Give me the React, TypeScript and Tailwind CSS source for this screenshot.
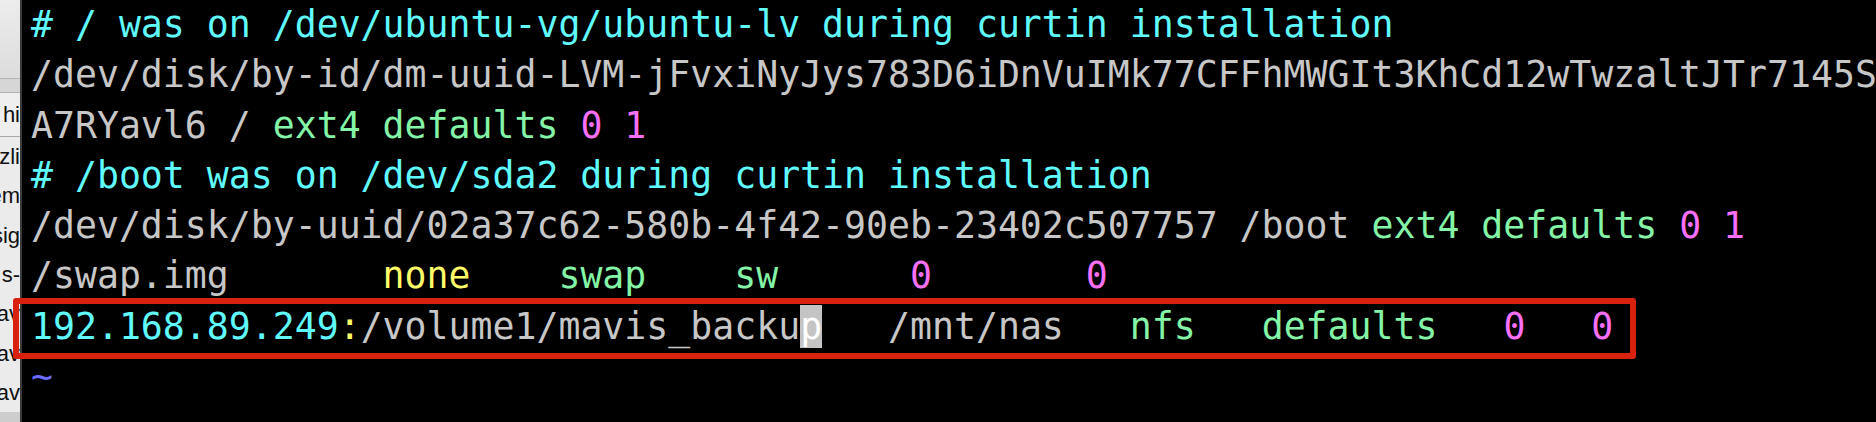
import React from "react";

const C = {
  cyan: "text-[#60fbff]",
  gray: "text-[#c7c7c7]",
  green: "text-[#84f4a6]",
  mag: "text-[#f870f8]",
  yel: "text-[#fdfb68]",
};

function Line({ children }: { children: React.ReactNode }) {
  return <div className="h-[50.3px] leading-[50.3px] whitespace-pre">{children}</div>;
}

const sideRows = ["zli", "em", "sig", "s-", "av", "av", "av"];

export default function App() {
  return (
    <div className="relative flex h-[422px] w-[1876px] overflow-hidden bg-black">
      {/* window behind, peeking on the left */}
      <div className="flex w-[20px] shrink-0 flex-col bg-[#e4e4e4] font-['Liberation_Sans',sans-serif] text-[22px] text-[#111]">
        <div className="h-[78px] bg-gradient-to-b from-[#ededed] to-[#dcdcdc]" />
        <div className="h-[15px] border-y border-[#b4b4b4] bg-[#d6d6d6]" />
        <div className="flex h-[44px] items-center justify-end overflow-hidden border-b border-[#a9a9a9] bg-[#efefef] whitespace-nowrap">
          <span>hi</span>
        </div>
        <div className="flex flex-col bg-[#ebebeb]">
          {sideRows.map((t, i) => (
            <div key={i} className="flex h-[39.3px] items-center justify-end overflow-hidden whitespace-nowrap">
              <span>{t}</span>
            </div>
          ))}
        </div>
        <div className="flex-1 bg-[#cdcdcd]" />
      </div>
      <div className="w-[2px] shrink-0 bg-[#3a3a3a]" />
      {/* terminal */}
      <div className="flex-1 overflow-hidden bg-black pl-[9px] font-['DejaVu_Sans_Mono',monospace] text-[36.5px] text-[#c7c7c7]">
        <Line>
          <span className={C.cyan}># / was on /dev/ubuntu-vg/ubuntu-lv during curtin installation</span>
        </Line>
        <Line>
          <span className={C.gray}>/dev/disk/by-id/dm-uuid-LVM-jFvxiNyJys783D6iDnVuIMk77CFFhMWGIt3KhCd12wTwzaltJTr7145S</span>
        </Line>
        <Line>
          <span className={C.gray}>A7RYavl6 / </span>
          <span className={C.green}>ext4 defaults</span> <span className={C.mag}>0 1</span>
        </Line>
        <Line>
          <span className={C.cyan}># /boot was on /dev/sda2 during curtin installation</span>
        </Line>
        <Line>
          <span className={C.gray}>/dev/disk/by-uuid/02a37c62-580b-4f42-90eb-23402c507757 /boot </span>
          <span className={C.green}>ext4 defaults</span> <span className={C.mag}>0 1</span>
        </Line>
        <Line>
          <span className={C.gray}>/swap.img       </span>
          <span className={C.yel}>none</span>
          {"    "}
          <span className={C.green}>swap</span>
          {"    "}
          <span className={C.green}>sw</span>
          {"      "}
          <span className={C.mag}>0</span>
          {"       "}
          <span className={C.mag}>0</span>
        </Line>
        <Line>
          <span className={C.cyan}>192.168.89.249</span>
          <span className={C.yel}>:</span>
          <span className={C.gray}>/volume1/mavis_backu</span>
          <span className="bg-[#c4c4c4] text-white">p</span>
          <span className={C.gray}>   /mnt/nas   </span>
          <span className={C.green}>nfs</span>
          {"   "}
          <span className={C.green}>defaults</span>
          {"   "}
          <span className={C.mag}>0</span>
          {"   "}
          <span className={C.mag}>0</span>
        </Line>
        <Line>
          <span className="text-[#6c6cff]">~</span>
        </Line>
      </div>
      {/* red annotation box */}
      <div className="pointer-events-none absolute left-[13px] top-[298px] h-[61px] w-[1623px] rounded-[3px] border-[6px] border-[#d8220f]" />
    </div>
  );
}
